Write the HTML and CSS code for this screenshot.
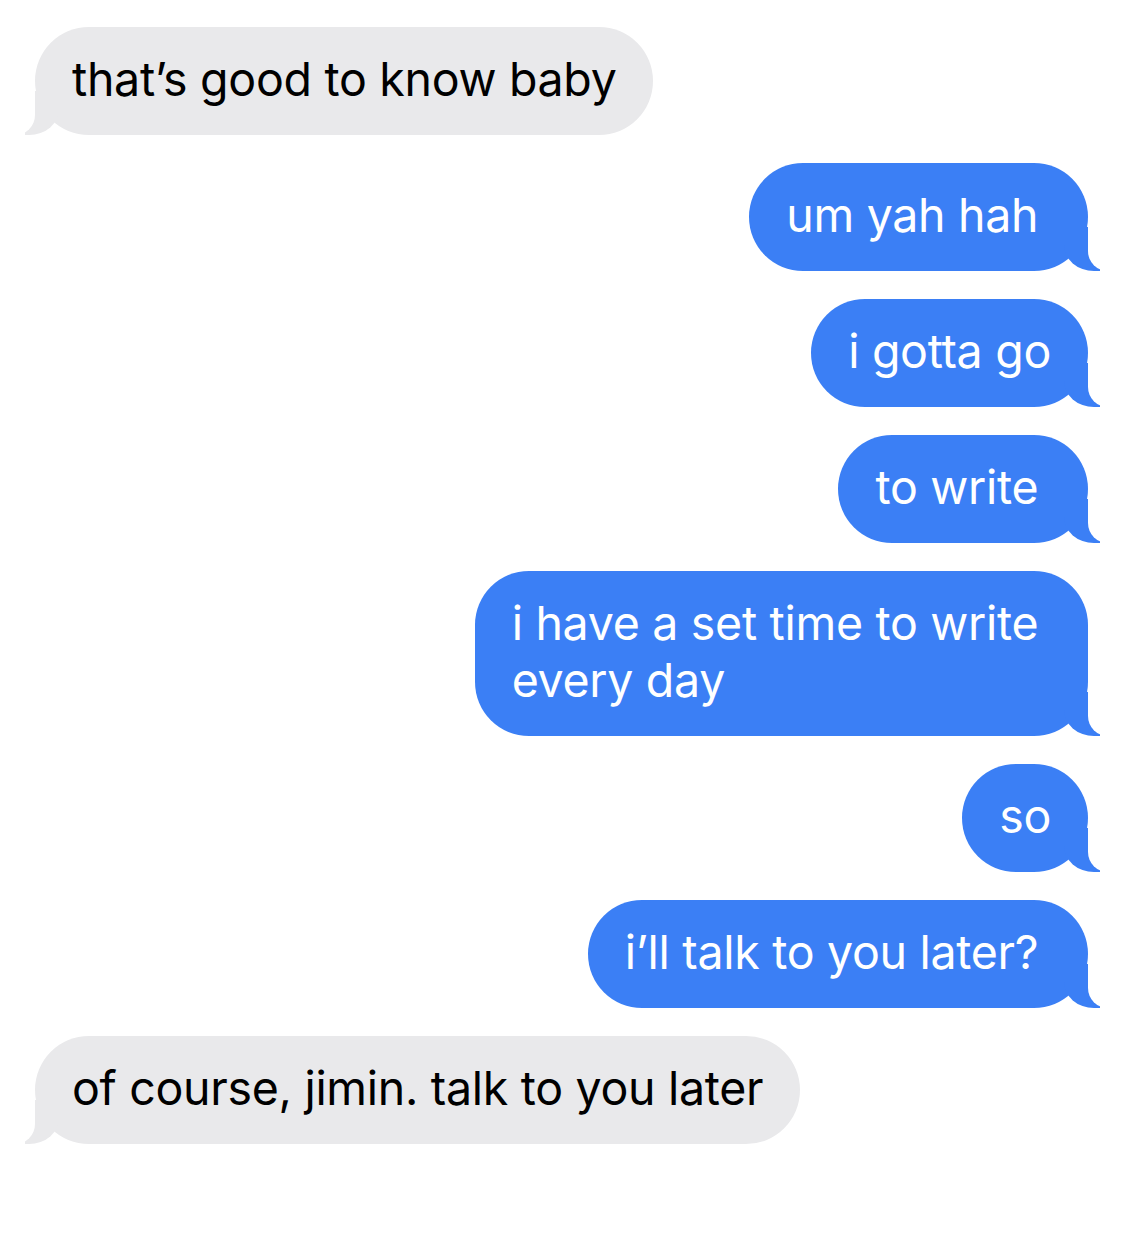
FILE: index.html
```html
<!DOCTYPE html>
<html>
<head>
<meta charset="utf-8">
<link rel="stylesheet" href="styles.css">
</head>
<body>
<div class="thread">
  <div class="row in"><div class="bubble recv">that’s good to know baby</div></div>
  <div class="row out"><div class="bubble sent">um yah hah&nbsp;</div></div>
  <div class="row out"><div class="bubble sent">i gotta go</div></div>
  <div class="row out"><div class="bubble sent">to write&nbsp;</div></div>
  <div class="row out"><div class="bubble sent">i have a set time to write&nbsp;<br>every day</div></div>
  <div class="row out"><div class="bubble sent">so</div></div>
  <div class="row out"><div class="bubble sent">i’ll talk to you later?&nbsp;</div></div>
  <div class="row in"><div class="bubble recv">of course, jimin. talk to you later</div></div>
</div>
</body>
</html>
```
FILE: styles.css
```css
html, body {
  margin: 0;
  padding: 0;
  background: #ffffff;
}

.thread {
  display: flex;
  flex-direction: column;
  gap: 28px;
  padding: 27px 37px 0 35px;
  font-family: "Inter", "Liberation Sans", sans-serif;
  font-size: 46.5px;
  line-height: 57px;
  letter-spacing: -0.3px;
}

.row {
  display: flex;
}

.row.in {
  justify-content: flex-start;
}

.row.out {
  justify-content: flex-end;
}

.bubble {
  position: relative;
  padding: 24px 37px 27px 37px;
  border-radius: 54px;
  white-space: nowrap;
}

.sent {
  background: #3b7ff5;
  color: #ffffff;
}

.recv {
  background: #e9e9eb;
  color: #000000;
}

.sent::before,
.sent::after,
.recv::before,
.recv::after {
  content: "";
  position: absolute;
  bottom: 0;
  height: 44px;
}

.sent::before {
  right: -12px;
  width: 36px;
  background: #3b7ff5;
  border-bottom-left-radius: 30px 26px;
}

.sent::after {
  right: -44px;
  width: 44px;
  background: #ffffff;
  border-bottom-left-radius: 20px;
}

.recv::before {
  left: -10px;
  width: 34px;
  background: #e9e9eb;
  border-bottom-right-radius: 30px 26px;
}

.recv::after {
  left: -44px;
  width: 44px;
  background: #ffffff;
  border-bottom-right-radius: 20px;
}
```
